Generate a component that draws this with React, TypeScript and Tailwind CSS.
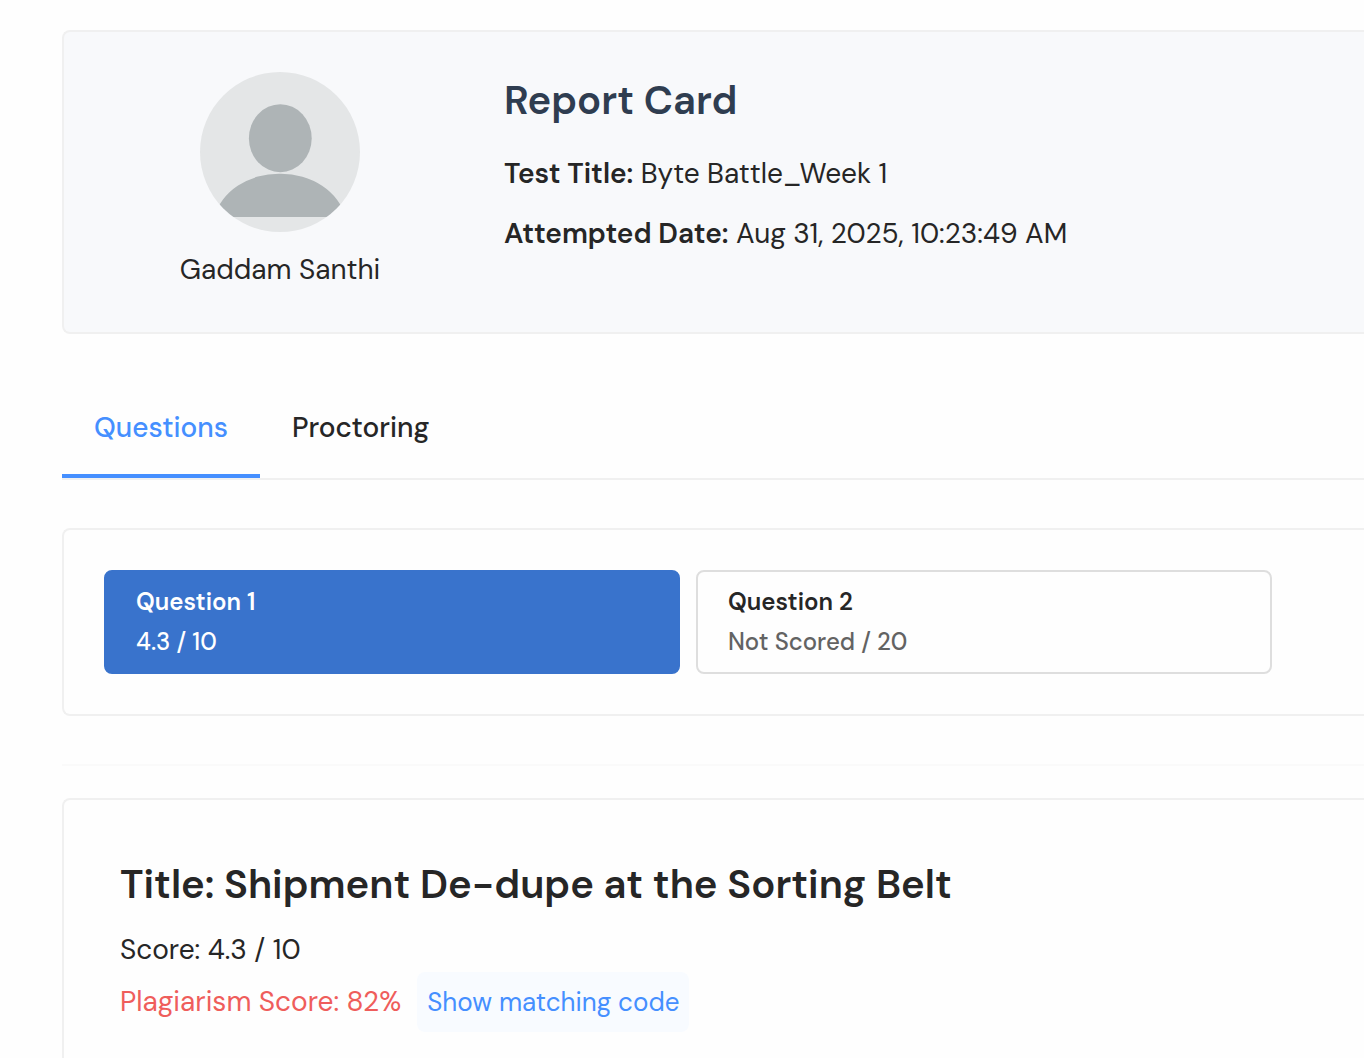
import { useState } from "react"
import clsx from "clsx"

type Question = { id: number; score: string; total: number }

const TABS = ["Questions", "Proctoring"]

const QUESTIONS: Question[] = [
  { id: 1, score: "4.3", total: 10 },
  { id: 2, score: "Not Scored", total: 20 },
]

function Avatar() {
  return (
    <svg viewBox="0 0 160 160" className="size-40" aria-hidden="true">
      <defs>
        <clipPath id="avatar-clip">
          <circle cx="80" cy="80" r="80" />
        </clipPath>
      </defs>
      <g clipPath="url(#avatar-clip)">
        <rect width="160" height="160" fill="#e4e6e7" />
        <ellipse cx="80.3" cy="66.2" rx="31.4" ry="34" fill="#aeb4b6" />
        <path d="M14.5 145A66 55 0 0 1 80.2 101.7A66 55 0 0 1 145.5 145Z" fill="#aeb4b6" />
      </g>
    </svg>
  )
}

function ReportHeader() {
  return (
    <header className="flex gap-12 rounded-l-lg border-2 border-r-0 border-[#f0f0f0] bg-[#f8f9fb] p-10">
      <div className="flex w-88 shrink-0 flex-col items-center">
        <Avatar />
        <p className="mt-4">Gaddam Santhi</p>
      </div>
      <div>
        <h1 className="mb-6 text-[40px] leading-14 font-semibold text-[#2f3d50]">Report Card</h1>
        <p className="mb-4">
          <strong className="font-semibold">Test Title:</strong> Byte Battle_Week 1
        </p>
        <p>
          <strong className="font-semibold">Attempted Date:</strong> Aug 31, 2025, 10:23:49 AM
        </p>
      </div>
    </header>
  )
}

export default function App() {
  const [tab, setTab] = useState("Questions")
  const [current, setCurrent] = useState(1)

  return (
    <main className="flex min-h-screen flex-col bg-[#fefefe] pt-[30px] pl-[62px] font-['DM_Sans',Inter,sans-serif] text-[28px] leading-11 text-[#262626]">
      <ReportHeader />

      <div role="tablist" className="mt-12 flex border-b-2 border-[#f0f0f0]">
        {TABS.map((name) => (
          <button
            key={name}
            type="button"
            role="tab"
            aria-selected={tab === name}
            onClick={() => setTab(name)}
            className={clsx(
              "border-b-4 px-8 py-6 font-medium",
              tab === name ? "border-[#458fff] text-[#458fff]" : "border-transparent",
            )}
          >
            {name}
          </button>
        ))}
      </div>

      <section className="mt-12 flex gap-4 rounded-l-lg border-2 border-r-0 border-[#f0f0f0] p-10">
        {QUESTIONS.map((q) => (
          <button
            key={q.id}
            type="button"
            aria-pressed={current === q.id}
            onClick={() => setCurrent(q.id)}
            className={clsx(
              "w-xl rounded-lg border-2 px-[30px] py-2.5 text-left text-2xl leading-10",
              current === q.id ? "border-[#3973cc] bg-[#3973cc] text-white" : "border-[#dedede]",
            )}
          >
            <span className="block leading-10 font-semibold">Question {q.id}</span>
            <span className={clsx("block leading-10 font-medium", current !== q.id && "text-[#636363]")}>
              {q.score} / {q.total}
            </span>
          </button>
        ))}
      </section>

      <hr className="mt-12 mb-8 border-t-2 border-[#fafafa]" />

      <section className="flex-1 rounded-tl-lg border-t-2 border-l-2 border-[#f0f0f0] px-14 pt-14 pb-6">
        <h2 className="mb-4 text-[40px] leading-14 font-semibold">Title: Shipment De-dupe at the Sorting Belt</h2>
        <p>Score: 4.3 / 10</p>
        <div className="flex items-center gap-4">
          <p className="text-[#ef5d5b]">Plagiarism Score: 82%</p>
          <button type="button" className="rounded-lg bg-[#f8fbff] px-2.5 py-2 text-[26px] text-[#458fff]">
            Show matching code
          </button>
        </div>
      </section>
    </main>
  )
}
